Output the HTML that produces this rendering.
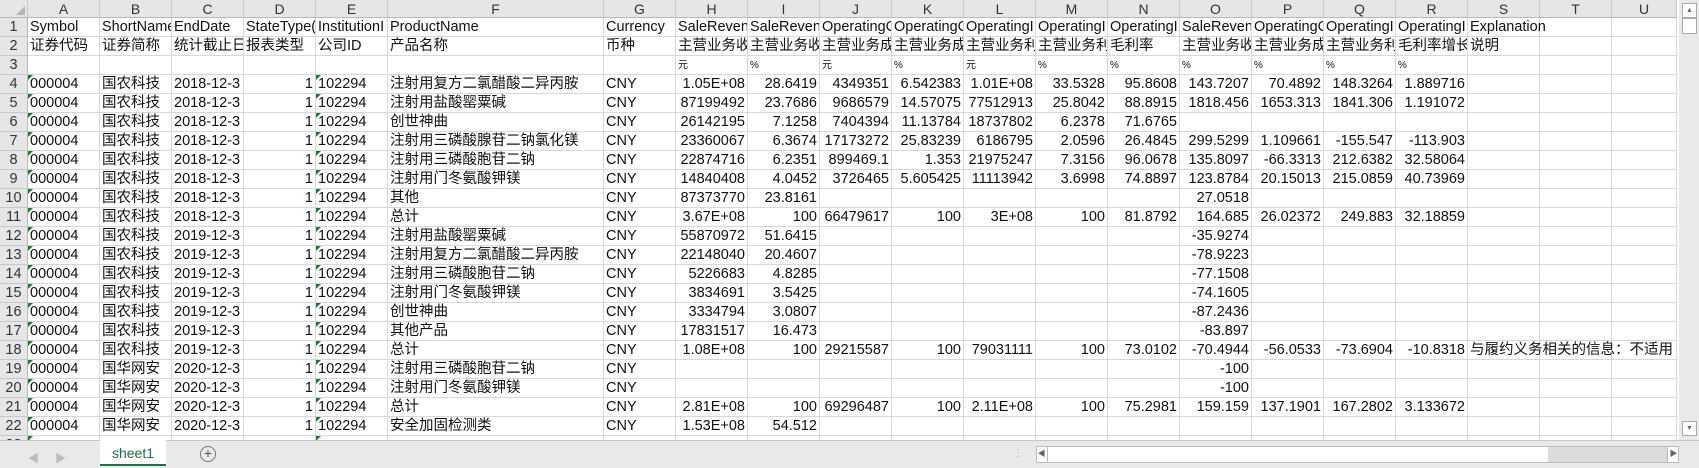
<!DOCTYPE html>
<html><head><meta charset="utf-8">
<style>
*{margin:0;padding:0;box-sizing:border-box}
body{width:1699px;height:468px;overflow:hidden;background:#fff;font-family:"Liberation Sans","Noto Sans CJK SC",sans-serif;font-size:14.5px;color:#111;position:relative}
.c{position:absolute;height:19px;line-height:19px;white-space:nowrap;overflow:hidden;padding:0 2px}
.r{text-align:right}
.gv{position:absolute;top:18px;width:1px;height:422px;background:#d8d8d8}
.gh{position:absolute;left:28px;height:1px;width:1650px;background:#d8d8d8}
.ch{position:absolute;top:0;height:18px;line-height:18px;text-align:center;background:#e6e6e6;color:#333;font-size:14px;border-right:1px solid #c8c8c8;border-bottom:1px solid #b8b8b8}
.rh{position:absolute;left:0;width:28px;height:19px;line-height:19px;text-align:center;background:#e6e6e6;color:#333;border-bottom:1px solid #c8c8c8;border-right:1px solid #b8b8b8}
.tri{position:absolute;width:0;height:0;border-top:5px solid #1e7b34;border-right:5px solid transparent}
.sm{font-size:10px}
</style></head><body>
<div id="g"></div>
<div style="position:absolute;left:0;top:440px;width:1699px;height:28px;background:#e9e9e9;border-top:1px solid #c8c8c8"></div>
<div style="position:absolute;left:28px;top:450px;color:#bbb;font-size:11px">&#9664;</div>
<div style="position:absolute;left:55px;top:450px;color:#bbb;font-size:11px">&#9654;</div>
<div style="position:absolute;left:100px;top:440px;width:66px;height:26px;background:#fff;border-bottom:2px solid #1e7145;color:#1e7145;text-align:center;line-height:26px;font-size:14px">sheet1</div>
<div style="position:absolute;left:200px;top:446px;width:16px;height:16px;border:1px solid #777;border-radius:50%;text-align:center;line-height:13px;color:#555;font-size:14px">+</div>
<div style="position:absolute;left:1013px;top:448px;color:#aaa;font-size:10px">&#8942;</div>
<div style="position:absolute;left:1036px;top:446px;width:643px;height:17px;background:#fff;border:1px solid #bbb"></div>
<div style="position:absolute;left:1036px;top:446px;width:12px;height:17px;border-right:1px solid #bbb;font-size:8px;line-height:16px;text-align:center;color:#666">&#9664;</div>
<div style="position:absolute;left:1548px;top:447px;width:120px;height:15px;background:#dcdcdc"></div>
<div style="position:absolute;left:1667px;top:446px;width:12px;height:17px;border-left:1px solid #bbb;font-size:8px;line-height:16px;text-align:center;color:#666">&#9654;</div>
<div style="position:absolute;left:1679px;top:0;width:20px;height:440px;background:#e9e9e9"></div>
<div style="position:absolute;left:1682px;top:3px;width:15px;height:15px;background:#fff;border:1px solid #aaa;font-size:7px;text-align:center;line-height:13px;color:#666">&#9650;</div>
<div style="position:absolute;left:1682px;top:18px;width:15px;height:16px;background:#fff;border:1px solid #aaa"></div>
<div style="position:absolute;left:1682px;top:421px;width:15px;height:15px;background:#fff;border:1px solid #aaa;font-size:7px;text-align:center;line-height:13px;color:#666">&#9660;</div>
<script>
var X=[28];var widths=[72,72,72,72,72,216,72,72,72,72,72,72,72,72,72,72,72,72,72,72,65];
for(var i=0;i<widths.length;i++)X.push(X[i]+widths[i]);
var L="ABCDEFGHIJKLMNOPQRSTU";
var h="";
h+='<div class="ch" style="left:0;width:28px;background:#e6e6e6"><div style="position:absolute;right:2px;bottom:2px;width:0;height:0;border-bottom:9px solid #b5b5b5;border-left:9px solid transparent"></div></div>';
for(var i=0;i<21;i++)h+='<div class="ch" style="left:'+X[i]+'px;width:'+widths[i]+'px">'+L[i]+'</div>';
for(var i=1;i<=21;i++)h+='<div class="gv" style="left:'+(X[i]-1)+'px"></div>';
for(var r=1;r<=23;r++){h+='<div class="gh" style="top:'+(18+r*19-1)+'px"></div>';}
for(var r=1;r<=23;r++)h+='<div class="rh" style="top:'+(18+(r-1)*19)+'px">'+r+'</div>';
var rows=[
["Symbol","ShortName","EndDate","StateType(","InstitutionI","ProductName","Currency","SaleRevenu","SaleRevenu","OperatingC","OperatingC","OperatingI","OperatingI","OperatingI","SaleRevenu","OperatingC","OperatingI","OperatingI","Explanation"],
["证券代码","证券简称","统计截止日","报表类型","公司ID","产品名称","币种","主营业务收","主营业务收","主营业务成","主营业务成","主营业务利","主营业务利","毛利率","主营业务收","主营业务成","主营业务利","毛利率增长","说明"],
["","","","","","","","元","%","元","%","元","%","%","%","%","%","%",""]];
var A1=["国农科技","2018-12-3"],A2=["国农科技","2019-12-3"],A3=["国华网安","2020-12-3"];
var d=[
[A1,"注射用复方二氯醋酸二异丙胺","1.05E+08","28.6419","4349351","6.542383","1.01E+08","33.5328","95.8608","143.7207","70.4892","148.3264","1.889716"],
[A1,"注射用盐酸罂粟碱","87199492","23.7686","9686579","14.57075","77512913","25.8042","88.8915","1818.456","1653.313","1841.306","1.191072"],
[A1,"创世神曲","26142195","7.1258","7404394","11.13784","18737802","6.2378","71.6765"],
[A1,"注射用三磷酸腺苷二钠氯化镁","23360067","6.3674","17173272","25.83239","6186795","2.0596","26.4845","299.5299","1.109661","-155.547","-113.903"],
[A1,"注射用三磷酸胞苷二钠","22874716","6.2351","899469.1","1.353","21975247","7.3156","96.0678","135.8097","-66.3313","212.6382","32.58064"],
[A1,"注射用门冬氨酸钾镁","14840408","4.0452","3726465","5.605425","11113942","3.6998","74.8897","123.8784","20.15013","215.0859","40.73969"],
[A1,"其他","87373770","23.8161","","","","","","27.0518"],
[A1,"总计","3.67E+08","100","66479617","100","3E+08","100","81.8792","164.685","26.02372","249.883","32.18859"],
[A2,"注射用盐酸罂粟碱","55870972","51.6415","","","","","","-35.9274"],
[A2,"注射用复方二氯醋酸二异丙胺","22148040","20.4607","","","","","","-78.9223"],
[A2,"注射用三磷酸胞苷二钠","5226683","4.8285","","","","","","-77.1508"],
[A2,"注射用门冬氨酸钾镁","3834691","3.5425","","","","","","-74.1605"],
[A2,"创世神曲","3334794","3.0807","","","","","","-87.2436"],
[A2,"其他产品","17831517","16.473","","","","","","-83.897"],
[A2,"总计","1.08E+08","100","29215587","100","79031111","100","73.0102","-70.4944","-56.0533","-73.6904","-10.8318","与履约义务相关的信息：不适用"],
[A3,"注射用三磷酸胞苷二钠","","","","","","","","-100"],
[A3,"注射用门冬氨酸钾镁","","","","","","","","-100"],
[A3,"总计","2.81E+08","100","69296487","100","2.11E+08","100","75.2981","159.159","137.1901","167.2802","3.133672"],
[A3,"安全加固检测类","1.53E+08","54.512"]];
function cell(col,row,txt,cls,ov){var y=18+(row-1)*19;var w=ov?(1679-X[col]):widths[col]-1;
h+='<div class="c '+(cls||'')+'" style="left:'+X[col]+'px;top:'+y+'px;width:'+w+'px;">'+txt+'</div>';}
for(var r=0;r<3;r++)for(var c=0;c<rows[r].length;c++){if(rows[r][c]==="")continue;cell(c,r+1,rows[r][c],r==2?'sm':'',c==18);}
for(var i=0;i<d.length;i++){var row=i+4,e=d[i];
cell(0,row,"000004");cell(1,row,e[0][0]);cell(2,row,e[0][1]);cell(3,row,"1","r");cell(4,row,"102294");cell(5,row,e[1]);cell(6,row,"CNY");
for(var k=2;k<e.length;k++){if(e[k]==="")continue;var col=k+5;if(col==18)cell(col,row,e[k],'',true);else cell(col,row,e[k],'r');}}
for(var row=4;row<=23;row++){var y=18+(row-1)*19;h+='<div class="tri" style="left:'+X[0]+'px;top:'+y+'px"></div><div class="tri" style="left:'+X[4]+'px;top:'+y+'px"></div>';}
document.getElementById('g').innerHTML=h;
</script>
</body></html>
